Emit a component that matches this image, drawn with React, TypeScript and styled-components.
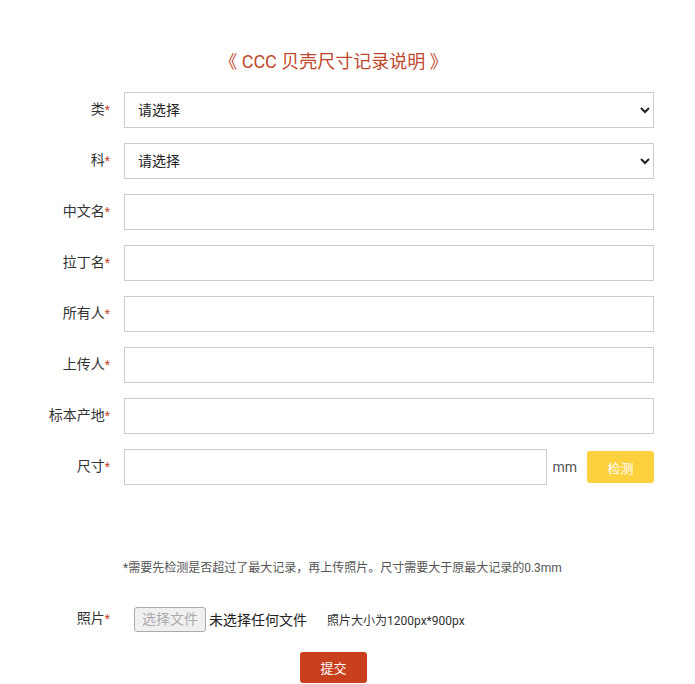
import styled, {createGlobalStyle} from "styled-components";

const GlobalStyle = createGlobalStyle`
    body {
        margin: 0;
        background: #fff;
        font-family: Roboto, "Noto Sans CJK SC", sans-serif;
        color: #333;
    }
`

const fields = ["中文名", "拉丁名", "所有人", "上传人", "标本产地"];

export default function App() {
    return (
        <Page>
            <GlobalStyle/>
            <Title>《 CCC 贝壳尺寸记录说明 》</Title>
            <Form>
                <Row>
                    <Label>类<Star>*</Star></Label>
                    <Select defaultValue="">
                        <option value="">请选择</option>
                    </Select>
                </Row>
                <Row>
                    <Label>科<Star>*</Star></Label>
                    <Select defaultValue="">
                        <option value="">请选择</option>
                    </Select>
                </Row>
                {fields.map((f) => (
                    <Row key={f}>
                        <Label>{f}<Star>*</Star></Label>
                        <Input type="text"/>
                    </Row>
                ))}
                <Row>
                    <Label>尺寸<Star>*</Star></Label>
                    <Input type="text"/>
                    <Unit>mm</Unit>
                    <CheckButton>检测</CheckButton>
                </Row>
            </Form>
            <Note>*需要先检测是否超过了最大记录，再上传照片。尺寸需要大于原最大记录的0.3mm</Note>
            <PhotoRow>
                <Label>照片<Star>*</Star></Label>
                <FileButton>选择文件</FileButton>
                <FileText>未选择任何文件</FileText>
                <Hint>照片大小为1200px*900px</Hint>
            </PhotoRow>
            <Footer>
                <Submit>提交</Submit>
            </Footer>
        </Page>
    );
}

const Page = styled.div`
    width: 667px;
    padding-top: 50px;
`

const Title = styled.h2`
    margin: 0;
    text-align: center;
    font-size: 18px;
    font-weight: 400;
    color: #c0482c;
    line-height: 24px;
`

const Form = styled.div`
    margin-top: 18px;
    width: 654px;
`

const Row = styled.div`
    display: flex;
    align-items: center;
    height: 36px;
    margin-bottom: 15px;
`

const Label = styled.label`
    width: 110px;
    flex-shrink: 0;
    margin-right: 14px;
    text-align: right;
    font-size: 14px;
    color: #333;
    line-height: 20px;
    margin-top: -2px;
`

const Star = styled.span`
    color: #c0482c;
    font-size: 12px;
`

const Select = styled.select`
    flex: 1;
    height: 36px;
    border: 1px solid #ccc;
    border-radius: 0;
    background: #fff;
    padding: 0 9px;
    font-size: 14px;
    font-family: Roboto, "Noto Sans CJK SC", sans-serif;
    color: #222;
    outline: none;
`

const Input = styled.input`
    flex: 1;
    min-width: 0;
    height: 36px;
    box-sizing: border-box;
    border: 1px solid #ccc;
    padding: 0 12px;
    font-size: 14px;
    outline: none;
`

const Unit = styled.span`
    margin: 0 10px 0 5px;
    font-size: 14px;
    color: #555;
`

const CheckButton = styled.button`
    width: 67px;
    height: 32px;
    border: none;
    border-radius: 3px;
    background: #fdd03e;
    color: #fff;
    font-size: 13px;
    font-family: Roboto, "Noto Sans CJK SC", sans-serif;
`

const Note = styled.p`
    margin: 74px 0 0 123px;
    font-size: 12px;
    color: #555;
    line-height: 18px;
`

const PhotoRow = styled.div`
    display: flex;
    align-items: center;
    margin-top: 29px;
    height: 26px;
`

const FileButton = styled.span`
    margin-left: 10px;
    width: 72px;
    text-align: center;
    height: 25px;
    box-sizing: border-box;
    border: 1px solid #aaa;
    border-radius: 3px;
    background: #f0f0f0;
    color: #aaa;
    font-size: 14px;
    line-height: 23px;
`

const FileText = styled.span`
    margin-left: 3px;
    font-size: 14px;
    color: #222;
`

const Hint = styled.span`
    margin-left: 20px;
    font-size: 12px;
    color: #333;
`

const Footer = styled.div`
    display: flex;
    justify-content: center;
    margin-top: 20px;
`

const Submit = styled.button`
    width: 67px;
    height: 31px;
    border: none;
    border-radius: 3px;
    background: #c9401f;
    color: #fff;
    font-size: 13px;
    font-family: Roboto, "Noto Sans CJK SC", sans-serif;
`
